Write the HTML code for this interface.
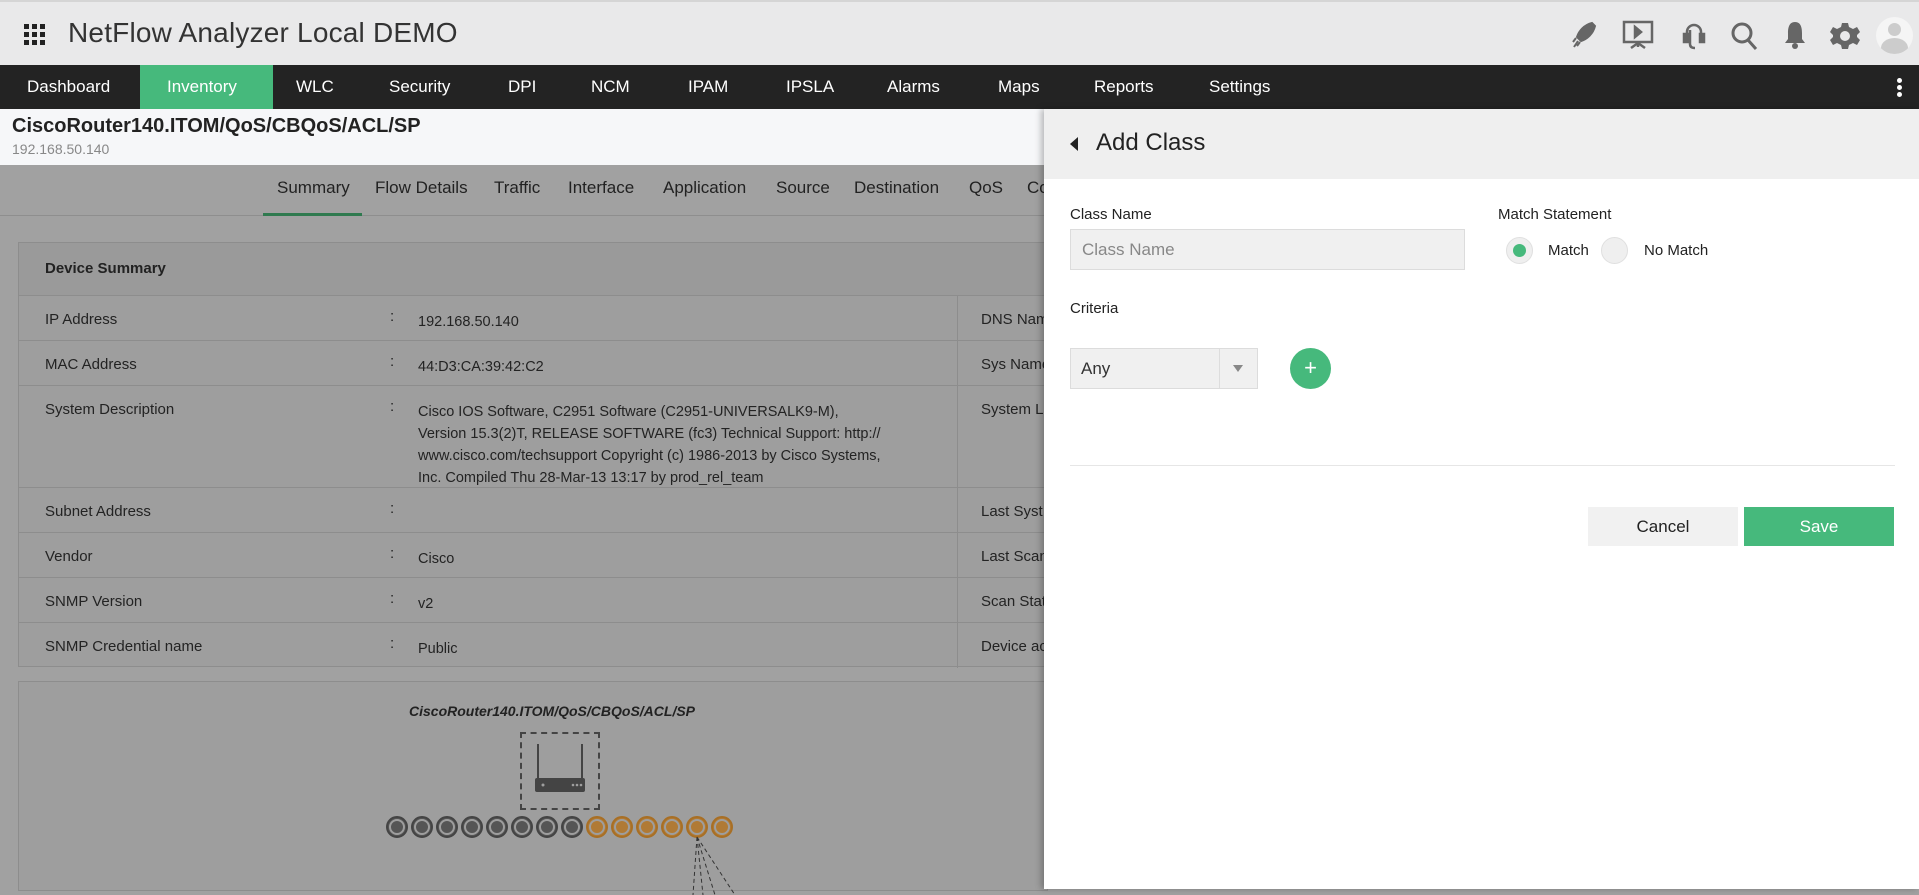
<!DOCTYPE html>
<html><head><meta charset="utf-8">
<style>
*{box-sizing:border-box;margin:0;padding:0}
body{width:1919px;height:889px;overflow:hidden;font-family:"Liberation Sans",sans-serif;background:#a1a1a1;position:relative;color:#222}
.top{position:absolute;left:0;top:0;width:1919px;height:65px;background:#e9e9ea;border-top:2px solid #d5d5d5}
.title{position:absolute;left:68px;top:15px;font-size:28px;color:#333;letter-spacing:0.2px}
.grid{position:absolute;left:24px;top:22px;width:22px;height:22px}
.nav{position:absolute;left:0;top:65px;width:1919px;height:44px;background:#232323}
.nav span{position:absolute;top:12px;color:#fff;font-size:17px}
.inv{position:absolute;left:140px;top:0;width:133px;height:44px;background:#46b97c}
.bc{position:absolute;left:0;top:109px;width:1044px;height:56px;background:#f6f7f9}
.bc h1{position:absolute;left:12px;top:6px;font-size:20px;font-weight:bold;color:#222}
.bc div{position:absolute;left:12px;top:32px;font-size:14px;color:#888}
.tabs span{position:absolute;top:178px;font-size:17px;color:#222}
.tabline{position:absolute;left:0;top:215px;width:1044px;height:1px;background:#8e8e8e}
.ul{position:absolute;left:263px;top:213px;width:99px;height:3px;background:#2f7a4f}
.box{position:absolute;left:18px;top:242px;width:1030px;height:425px;background:#9e9e9e;border:1px solid #8d8d8d}
.row{position:absolute;left:0;width:1030px;border-top:1px solid #8d8d8d;font-size:15px;color:#232323}
.row .l{position:absolute;left:26px;top:15px}
.row .c{position:absolute;left:371px;top:12px}
.row .v{position:absolute;left:399px;top:15px;line-height:22px;width:500px;font-size:14.5px}
.row .r{position:absolute;left:962px;top:15px;white-space:nowrap}
.vd{position:absolute;left:938px;top:52px;width:1px;height:373px;background:#8d8d8d}
.topo{position:absolute;left:18px;top:681px;width:1030px;height:210px;background:#9e9e9e;border:1px solid #8d8d8d}
.panel{position:absolute;left:1044px;top:109px;width:875px;height:780px;background:#fff;box-shadow:-3px 0 6px rgba(0,0,0,.25)}
.ph{position:absolute;left:0;top:0;width:875px;height:70px;background:#efefef}
.ph span{position:absolute;left:52px;top:20px;font-size:24px;color:#222}
.lbl{position:absolute;font-size:15px;color:#222}
.inp{position:absolute;left:26px;top:120px;width:395px;height:41px;background:#f0f0f0;border:1px solid #dcdcdc;font-size:17px;color:#888;padding:10px 11px}
.rad{position:absolute;top:128px;width:27px;height:27px;border-radius:50%;background:#efefef;border:1px solid #e0e0e0}
.sel{position:absolute;left:26px;top:239px;width:188px;height:41px;background:#f0f0f0;border:1px solid #dcdcdc}
.btn{position:absolute;top:398px;width:150px;height:39px;font-size:17px;text-align:center;line-height:39px}
</style></head><body>
<div class="top">
<svg class="grid" viewBox="0 0 22 22" fill="#222"><rect x="0" y="0" width="5" height="5"/><rect x="8" y="0" width="5" height="5"/><rect x="16" y="0" width="5" height="5"/><rect x="0" y="8" width="5" height="5"/><rect x="8" y="8" width="5" height="5"/><rect x="16" y="8" width="5" height="5"/><rect x="0" y="16" width="5" height="5"/><rect x="8" y="16" width="5" height="5"/><rect x="16" y="16" width="5" height="5"/></svg>
<div class="title">NetFlow Analyzer Local DEMO</div>
<svg style="position:absolute;left:1568px;top:18px" width="30" height="30" viewBox="0 0 30 30" fill="#666"><path d="M24 3 C16 5 11 11 9 17 L13 21 C19 19 25 14 27 6 Z M8 18 L5 22 M10 21 L6 27 M12 22 L9 26" stroke="#666" stroke-width="2"/></svg>
<svg style="position:absolute;left:1621px;top:16px" width="34" height="34" viewBox="0 0 34 34" fill="none" stroke="#666" stroke-width="2.5"><rect x="3" y="4" width="28" height="20"/><path d="M14 9 L20 14 L14 19Z" fill="#666"/><path d="M17 24 V29 M10 30 L17 25 L24 30"/></svg>
<svg style="position:absolute;left:1680px;top:20px" width="28" height="30" viewBox="0 0 28 30" fill="none" stroke="#666" stroke-width="2.5"><path d="M7 14 V10 A7 7 0 0 1 21 10 V14"/><rect x="4" y="12" width="4" height="8" fill="#666"/><rect x="20" y="12" width="4" height="8" fill="#666"/><path d="M10 8 V22 Q10 26 15 26"/></svg>
<svg style="position:absolute;left:1730px;top:18px" width="30" height="32" viewBox="0 0 30 32" fill="none" stroke="#666" stroke-width="3"><circle cx="12" cy="13" r="9"/><path d="M18 20 L26 29"/></svg>
<svg style="position:absolute;left:1783px;top:18px" width="24" height="30" viewBox="0 0 24 30" fill="#666"><path d="M12 2 C6 2 5 8 5 13 V19 L2 23 H22 L19 19 V13 C19 8 18 2 12 2Z"/><circle cx="12" cy="26" r="3"/></svg>
<svg style="position:absolute;left:1830px;top:19px" width="30" height="30" viewBox="0 0 30 30" fill="#666"><path d="M12 2h6l1 4 4 2 4-2 3 5-3 3v2l3 3-3 5-4-2-4 2-1 4h-6l-1-4-4-2-4 2-3-5 3-3v-2l-3-3 3-5 4 2 4-2z"/><circle cx="15" cy="15" r="5" fill="#e9e9ea"/></svg>
<div style="position:absolute;left:1876px;top:15px;width:37px;height:37px;border-radius:50%;background:#f5f5f5;overflow:hidden"><div style="position:absolute;left:12px;top:6px;width:13px;height:13px;border-radius:50%;background:#ccc"></div><div style="position:absolute;left:5px;top:21px;width:27px;height:20px;border-radius:50% 50% 0 0;background:#ccc"></div></div>
</div>
<div class="nav"><div class="inv"></div>
<span style="left:27px">Dashboard</span><span style="left:167px">Inventory</span><span style="left:296px">WLC</span><span style="left:389px">Security</span><span style="left:508px">DPI</span><span style="left:591px">NCM</span><span style="left:688px">IPAM</span><span style="left:786px">IPSLA</span><span style="left:887px">Alarms</span><span style="left:998px">Maps</span><span style="left:1094px">Reports</span><span style="left:1209px">Settings</span>
<div style="position:absolute;left:1897px;top:13px;width:5px;height:5px;border-radius:50%;background:#fff;box-shadow:0 7px 0 #fff,0 14px 0 #fff"></div>
</div>
<div class="bc"><h1>CiscoRouter140.ITOM/QoS/CBQoS/ACL/SP</h1><div>192.168.50.140</div></div>
<div class="tabs"><span style="left:277px">Summary</span><span style="left:375px">Flow Details</span><span style="left:494px">Traffic</span><span style="left:568px">Interface</span><span style="left:663px">Application</span><span style="left:776px">Source</span><span style="left:854px">Destination</span><span style="left:969px">QoS</span><span style="left:1027px">Co</span></div>
<div class="tabline"></div><div class="ul"></div>
<div class="box">
<div style="position:absolute;left:0;top:0;width:1030px;height:52px;background:#9a9a9a"></div>
<div style="position:absolute;left:26px;top:17px;font-size:15px;font-weight:bold">Device Summary</div>
<div class="row" style="top:52px;height:45px"><span class="l">IP Address</span><span class="c">:</span><span class="v">192.168.50.140</span><span class="r">DNS Nam</span></div>
<div class="row" style="top:97px;height:45px"><span class="l">MAC Address</span><span class="c">:</span><span class="v">44:D3:CA:39:42:C2</span><span class="r">Sys Name</span></div>
<div class="row" style="top:142px;height:102px"><span class="l">System Description</span><span class="c">:</span><span class="v">Cisco IOS Software, C2951 Software (C2951-UNIVERSALK9-M),<br>Version 15.3(2)T, RELEASE SOFTWARE (fc3) Technical Support: http://<br>www.cisco.com/techsupport Copyright (c) 1986-2013 by Cisco Systems,<br>Inc. Compiled Thu 28-Mar-13 13:17 by prod_rel_team</span><span class="r">System L</span></div>
<div class="row" style="top:244px;height:45px"><span class="l">Subnet Address</span><span class="c">:</span><span class="r">Last Syst</span></div>
<div class="row" style="top:289px;height:45px"><span class="l">Vendor</span><span class="c">:</span><span class="v">Cisco</span><span class="r">Last Scan</span></div>
<div class="row" style="top:334px;height:45px"><span class="l">SNMP Version</span><span class="c">:</span><span class="v">v2</span><span class="r">Scan Stat</span></div>
<div class="row" style="top:379px;height:46px"><span class="l">SNMP Credential name</span><span class="c">:</span><span class="v">Public</span><span class="r">Device ac</span></div>
<div class="vd"></div>
</div>
<div class="topo">
<div style="position:absolute;left:390px;top:21px;font-size:14px;font-weight:bold;font-style:italic;color:#222">CiscoRouter140.ITOM/QoS/CBQoS/ACL/SP</div>
<div style="position:absolute;left:501px;top:50px;width:80px;height:78px;border:2px dashed #444"></div>
<svg style="position:absolute;left:510px;top:60px" width="62" height="60" viewBox="0 0 62 60" fill="#444"><rect x="8" y="2" width="2" height="34"/><rect x="52" y="2" width="2" height="34"/><rect x="6" y="36" width="50" height="14" rx="2"/><circle cx="14" cy="43" r="1.5" fill="#9e9e9e"/><circle cx="44" cy="43" r="1.3" fill="#9e9e9e"/><circle cx="48" cy="43" r="1.3" fill="#9e9e9e"/><circle cx="52" cy="43" r="1.3" fill="#9e9e9e"/></svg>
<svg style="position:absolute;left:366px;top:133px" width="360" height="80" viewBox="0 0 360 80">
<g fill="#555" stroke="#444" stroke-width="2">
<circle cx="12" cy="12" r="10"/><circle cx="37" cy="12" r="10"/><circle cx="62" cy="12" r="10"/><circle cx="87" cy="12" r="10"/><circle cx="112" cy="12" r="10"/><circle cx="137" cy="12" r="10"/><circle cx="162" cy="12" r="10"/><circle cx="187" cy="12" r="10"/></g>
<g fill="none" stroke="#9e9e9e" stroke-width="2"><circle cx="12" cy="12" r="7"/><circle cx="37" cy="12" r="7"/><circle cx="62" cy="12" r="7"/><circle cx="87" cy="12" r="7"/><circle cx="112" cy="12" r="7"/><circle cx="137" cy="12" r="7"/><circle cx="162" cy="12" r="7"/><circle cx="187" cy="12" r="7"/></g>
<g fill="#b07a35" stroke="#a86f25" stroke-width="2"><circle cx="212" cy="12" r="10"/><circle cx="237" cy="12" r="10"/><circle cx="262" cy="12" r="10"/><circle cx="287" cy="12" r="10"/><circle cx="312" cy="12" r="10"/><circle cx="337" cy="12" r="10"/></g>
<g fill="none" stroke="#9e9e9e" stroke-width="2"><circle cx="212" cy="12" r="7"/><circle cx="237" cy="12" r="7"/><circle cx="262" cy="12" r="7"/><circle cx="287" cy="12" r="7"/><circle cx="312" cy="12" r="7"/><circle cx="337" cy="12" r="7"/></g>
<g stroke="#333" stroke-dasharray="4 3"><path d="M312 22 L308 80 M312 22 L318 80 M312 22 L330 80 M312 22 L350 80"/></g>
</svg>
</div>
<div class="panel">
<div class="ph"><svg style="position:absolute;left:26px;top:28px" width="8" height="14"><path d="M8 0 L0 7 L8 14Z" fill="#222"/></svg><span>Add Class</span></div>
<div class="lbl" style="left:26px;top:97px">Class Name</div>
<div class="inp">Class Name</div>
<div class="lbl" style="left:454px;top:97px">Match Statement</div>
<div class="rad" style="left:462px"><div style="position:absolute;left:6px;top:6px;width:13px;height:13px;border-radius:50%;background:#46b97c"></div></div>
<div class="lbl" style="left:504px;top:133px">Match</div>
<div class="rad" style="left:557px"></div>
<div class="lbl" style="left:600px;top:133px">No Match</div>
<div class="lbl" style="left:26px;top:191px">Criteria</div>
<div class="sel"><span style="position:absolute;left:10px;top:10px;font-size:17px;color:#333">Any</span><div style="position:absolute;left:148px;top:0;width:1px;height:39px;background:#ddd"></div><svg style="position:absolute;left:162px;top:16px" width="10" height="7"><path d="M0 0 H10 L5 7Z" fill="#888"/></svg></div>
<div style="position:absolute;left:246px;top:239px;width:41px;height:41px;border-radius:50%;background:#46b97c;color:#fff;font-size:22px;text-align:center;line-height:40px">+</div>
<div style="position:absolute;left:26px;top:356px;width:825px;height:1px;background:#e6e6e6"></div>
<div class="btn" style="left:544px;background:#f1f1f1;color:#222">Cancel</div>
<div class="btn" style="left:700px;background:#46b97c;color:#fff">Save</div>
</div>
</body></html>
